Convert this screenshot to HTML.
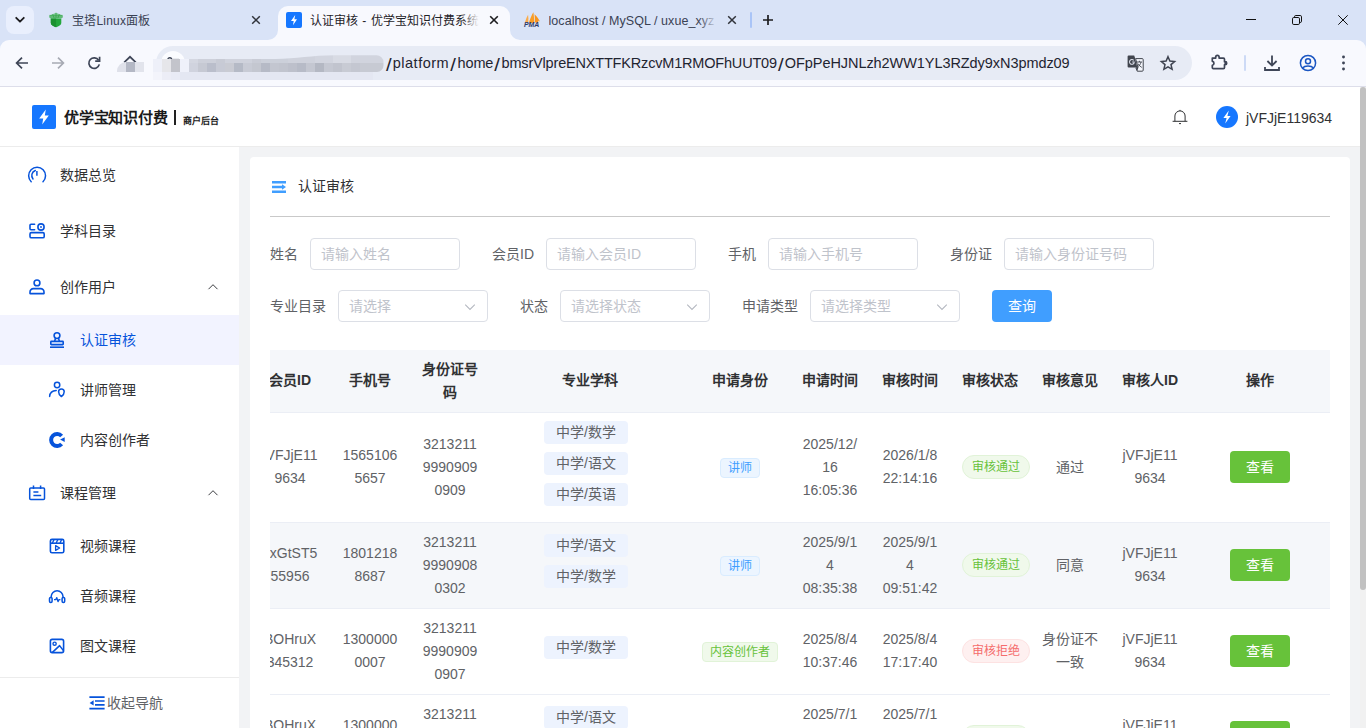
<!DOCTYPE html>
<html lang="zh-CN">
<head>
<meta charset="utf-8">
<title>认证审核 - 优学宝知识付费系统</title>
<style>
*{box-sizing:border-box;margin:0;padding:0}
html,body{width:1366px;height:728px;overflow:hidden;background:#fff}
body{font-family:"Liberation Sans",sans-serif;font-size:14px;color:#303133;position:relative}
.abs{position:absolute}
svg{display:block;overflow:visible}
/* ---------- browser chrome ---------- */
#chrome{position:absolute;left:0;top:0;width:1366px;height:87px;background:#d9e3f7;overflow:hidden}
#tabsearch{position:absolute;left:6px;top:6px;width:28px;height:28px;border-radius:8px;background:#e9effd}
.tabtxt{position:absolute;top:13.4px;height:17px;line-height:17px;font-size:12px;color:#3a4153;white-space:nowrap;overflow:hidden}
#acttab{position:absolute;left:278px;top:6px;width:232px;height:36px;background:#f8f9fe;border-radius:10px 10px 0 0}
#toolbar{position:absolute;left:0;top:40px;width:1366px;height:46px;background:#f8f9fe;border-radius:9px 9px 0 0}
#chromeline{position:absolute;left:0;top:86px;width:1366px;height:1px;background:#dddeea}
#omni{position:absolute;left:156px;top:46px;width:1036px;height:34px;border-radius:17px;background:#e7ebf5}
#url{position:absolute;left:385px;top:53px;height:20px;line-height:20px;font-size:14.5px;color:#1f2430;white-space:nowrap;letter-spacing:0}
/* ---------- app ---------- */
#hdr{position:absolute;left:0;top:87px;width:1360px;height:60px;background:#fff;border-bottom:1px solid #ececec}
#side{position:absolute;left:0;top:147px;width:239px;height:581px;background:#fff}
#main{position:absolute;left:239px;top:147px;width:1121px;height:581px;background:#f2f3f5;overflow:hidden}
#sbar{position:absolute;left:1360px;top:87px;width:6px;height:641px;background:#f1f1f1}
#sthumb{position:absolute;left:0;top:0;width:6px;height:503px;background:#c1c1c1;border-radius:3px}
.mi{position:absolute;left:0;width:239px;white-space:nowrap}
.mi span{position:absolute;font-size:14px;line-height:20px;height:20px;color:#303133}
.mi.top{height:56px}
.mi.top span{left:60px;top:18px}
.mi.sub{height:50px}
.mi.sub span{left:80px;top:15px}
.mi.act{background:#f2f3ff}
.mi.act span{color:#0653db}
.mi svg{position:absolute}
#card{position:absolute;left:11px;top:10px;width:1100px;height:700px;background:#fff;border-radius:4px}
.fl{position:absolute;height:32px;line-height:32px;font-size:14px;color:#606266;white-space:nowrap}
.inp{position:absolute;width:150px;height:32px;line-height:30px;border:1px solid #dcdfe6;border-radius:4px;background:#fff;padding:0 10px;font-size:14px;color:#bfc3cb;white-space:nowrap;overflow:hidden}
.inp.sel svg{position:absolute;right:11px;top:12px}
.btn{display:inline-block;width:60px;height:32px;line-height:32px;border-radius:4px;color:#fff;font-size:14px;text-align:center;white-space:nowrap;vertical-align:middle}
.btn.blue{background:#409eff}
.btn.green{background:#67c23a}
#tw{position:absolute;left:20px;top:193px;width:1060px;height:520px;overflow:hidden}
#tb{position:absolute;left:-20px;top:0;width:1080px;table-layout:fixed;border-collapse:separate;border-spacing:0}
#tb th{background:#f5f7fa;padding:8px 0;border-bottom:1px solid #ebeef5;font-weight:700;color:#303133;font-size:14px;text-align:center;vertical-align:middle}
#tb td{padding:8px 0;border-bottom:1px solid #ebeef5;color:#606266;font-size:14px;text-align:center;vertical-align:middle}
#tb th>div,#tb td>div{padding:0 10px;line-height:23px;white-space:nowrap}
#tb tr.hv td{background:#f5f7fa}
.sj{height:31px;text-align:center;font-size:0;line-height:0}
.sj span{display:inline-block;height:23px;line-height:23px;padding:0 12px;margin-right:8px;border-radius:4px;background:#edf3fe;color:#606266;font-size:14px;vertical-align:top}
.tg{display:inline-block;height:20px;line-height:18px;padding:0 7px;border-radius:4px;font-size:12px;border:1px solid;vertical-align:middle}
.tg.b{background:#ecf5ff;border-color:#d9ecff;color:#409eff}
.tg.g{background:#f0f9eb;border-color:#e1f3d8;color:#67c23a}
.st{display:inline-block;height:24px;line-height:22px;padding:0 9px;border-radius:12px;font-size:12px;border:1px solid;vertical-align:middle;margin-left:2px}
.st.g{background:#f0f9eb;border-color:#e1f3d8;color:#67c23a}
.st.r{background:#fef0f0;border-color:#fde2e2;color:#f56c6c}
#url .sl{display:inline-block;text-align:center;transform:translateY(1.2px) scale(1.4,1.32);transform-origin:50% 43.5%}
.u{position:relative;top:-1px}
#tb .btn,#tb .st{position:relative;top:-1px}
</style>
</head>
<body>
<!-- ================= BROWSER CHROME ================= -->
<div id="chrome">
  <div id="tabsearch"><svg width="28" height="28" viewBox="0 0 28 28"><path d="M10.2 11.8 L14 15.7 L17.8 11.8" fill="none" stroke="#1c1c1f" stroke-width="1.8" stroke-linecap="round" stroke-linejoin="round"/></svg></div>
  <!-- tab 1 -->
  <svg class="abs" style="left:49px;top:12px" width="14" height="16" viewBox="0 0 14 16"><path d="M1.8 6.4 H12.3 V11 C12.3 13 9.6 14.5 7.05 15.2 C4.5 14.5 1.8 13 1.8 11 Z" fill="#23a73c"/><path d="M1.8 6.4 H7.05 V15.2 C4.5 14.5 1.8 13 1.8 11 Z" fill="#1b9130"/><path d="M7 0.7 L13.6 3.4 L13.9 5 L12.4 6.4 H1.6 L0.2 5 L0.5 3.4 Z" fill="#3fb254" opacity="0.62"/><path d="M0.4 3.4 H13.6 M0.3 5 H13.8 M7 0.8 V6.4 M3.6 2.2 L5.2 6.2 M10.4 2.2 L8.8 6.2" fill="none" stroke="#2fa444" stroke-width="0.8" opacity="0.85"/></svg>
  <div class="tabtxt" style="left:72px;letter-spacing:0.2px">宝塔Linux面板</div>
  <svg class="abs" style="left:251px;top:15px" width="10" height="10" viewBox="0 0 10 10"><path d="M1.2 1.2 L8.8 8.8 M8.8 1.2 L1.2 8.8" stroke="#30333a" stroke-width="1.5" fill="none"/></svg>
  <!-- toolbar + active tab -->
  <div id="toolbar"></div>
  <div id="acttab"></div>
  <svg class="abs" style="left:268px;top:30px" width="10" height="10" viewBox="0 0 10 10"><path d="M0 10 H10 V0 A10 10 0 0 1 0 10 Z" fill="#f8f9fe"/></svg>
  <svg class="abs" style="left:510px;top:30px" width="10" height="10" viewBox="0 0 10 10"><path d="M10 10 H0 V0 A10 10 0 0 0 10 10 Z" fill="#f8f9fe"/></svg>
  <svg class="abs" style="left:286px;top:12px" width="16" height="16" viewBox="0 0 16 16"><rect width="16" height="16" rx="2" fill="#1677ff"/><path d="M9.2 3 L5 9 H7.7 L7 13.2 L11 7.2 H8.4 Z" fill="#fff"/></svg>
  <div class="tabtxt" style="left:310px;width:172px;color:#1f2328">认证审核<span style="letter-spacing:0.8px"> - </span>优学宝知识付费系统</div>
  <div class="abs" style="left:462px;top:10px;width:20px;height:22px;background:linear-gradient(90deg,rgba(248,249,254,0),#f8f9fe 85%)"></div>
  <svg class="abs" style="left:489px;top:15px" width="10" height="10" viewBox="0 0 10 10"><path d="M1.2 1.2 L8.8 8.8 M8.8 1.2 L1.2 8.8" stroke="#1c1c1f" stroke-width="1.6" fill="none"/></svg>
  <!-- tab 3 -->
  <svg class="abs" style="left:524px;top:12px" width="16" height="16" viewBox="0 0 16 16"><path d="M0.9 10.6 C1.8 7.6 2.8 5 4.1 2.8 C4.5 5.4 4.5 8 4.2 10.6 Z" fill="#fbab4a"/><path d="M4.9 10.9 C6 7 7.6 3.2 9.4 0.3 C10 3.6 10.2 7.2 10 10.9 Z" fill="#f99d25"/><path d="M10.6 2.2 C12.8 4.4 14.8 7 16 9.6 L13.8 8.6 L14.6 10.4 L10.6 10.6 C10.9 7.8 10.9 5 10.6 2.2 Z" fill="#f8941c"/><text x="0" y="15.1" font-family="Liberation Sans" font-size="6.9" font-weight="700" font-style="italic" fill="#2c3968">PMA</text></svg>
  <div class="tabtxt" style="left:548.5px;width:170px;font-size:12.5px;letter-spacing:0.06px">localhost / MySQL / uxue_xyz</div>
  <div class="abs" style="left:698px;top:10px;width:21px;height:22px;background:linear-gradient(90deg,rgba(217,227,247,0),#d9e3f7 95%)"></div>
  <svg class="abs" style="left:727px;top:15px" width="10" height="10" viewBox="0 0 10 10"><path d="M1.2 1.2 L8.8 8.8 M8.8 1.2 L1.2 8.8" stroke="#30333a" stroke-width="1.5" fill="none"/></svg>
  <div class="abs" style="left:750px;top:12px;width:2px;height:16px;background:#a9c4f7;border-radius:1px"></div>
  <svg class="abs" style="left:762px;top:14px" width="12" height="12" viewBox="0 0 12 12"><path d="M6 1 V11 M1 6 H11" stroke="#1c1c1f" stroke-width="1.7" fill="none"/></svg>
  <!-- window controls -->
  <div class="abs" style="left:1246px;top:19px;width:10px;height:1px;background:#111"></div>
  <svg class="abs" style="left:1292px;top:15px" width="10" height="10" viewBox="0 0 10 10"><path d="M2.5 2.5 V1.8 A1.3 1.3 0 0 1 3.8 0.5 H8.2 A1.3 1.3 0 0 1 9.5 1.8 V6.2 A1.3 1.3 0 0 1 8.2 7.5 H7.5" fill="none" stroke="#111" stroke-width="1"/><rect x="0.5" y="2.5" width="7" height="7" rx="1.3" fill="none" stroke="#111" stroke-width="1"/></svg>
  <svg class="abs" style="left:1338px;top:15px" width="10" height="10" viewBox="0 0 10 10"><path d="M0.3 0.3 L9.7 9.7 M9.7 0.3 L0.3 9.7" stroke="#111" stroke-width="1" fill="none"/></svg>
  <!-- nav buttons -->
  <svg class="abs" style="left:15px;top:56px" width="14" height="14" viewBox="0 0 14 14"><path d="M13 7 H2 M7 1.6 L1.6 7 L7 12.4" fill="none" stroke="#3e4557" stroke-width="1.7" stroke-linejoin="miter"/></svg>
  <svg class="abs" style="left:51px;top:56px" width="14" height="14" viewBox="0 0 14 14"><path d="M1 7 H12 M7 1.6 L12.4 7 L7 12.4" fill="none" stroke="#a7aab4" stroke-width="1.7"/></svg>
  <svg class="abs" style="left:87px;top:56px" width="14" height="14" viewBox="0 0 14 14"><path d="M11.6 4.2 A5.3 5.3 0 1 0 12.3 8.4" fill="none" stroke="#3e4557" stroke-width="1.7"/><path d="M12.6 0.8 V5.2 H8.2" fill="none" stroke="#3e4557" stroke-width="1.7"/></svg>
  <svg class="abs" style="left:122px;top:55px" width="16" height="16" viewBox="0 0 16 16"><path d="M2.2 7.4 L8 1.8 L13.8 7.4" fill="none" stroke="#3e4557" stroke-width="1.7"/></svg>
  <!-- omnibox -->
  <div id="omni"></div>
  <div class="abs" style="left:161px;top:51px;width:24px;height:24px;border-radius:12px;background:#fbfcff"></div>
  <svg class="abs" style="left:166px;top:56px" width="14" height="14" viewBox="0 0 14 14"><circle cx="3.8" cy="3.6" r="1.9" fill="none" stroke="#3e4557" stroke-width="1.4"/><path d="M7 3.6 H13" stroke="#3e4557" stroke-width="1.4"/></svg>
  <!-- mosaic -->
  <div class="abs" style="left:117px;top:62px;width:9px;height:10px;background:#dfe1ea;border-radius:9px 0 0 0"></div>
  <div class="abs" style="left:126px;top:62px;width:9px;height:10px;background:#b4b8c5"></div>
  <div class="abs" style="left:135px;top:62px;width:9px;height:10px;background:#e2e4ec"></div>
  <div class="abs" style="left:153px;top:59px;width:36px;height:13px;background:linear-gradient(90deg,#eef0f9 0 9px,#e6e6ea 9px 18px,#c3c4cb 18px 27px,#eff1fa 27px 36px)"></div>
  <div class="abs" style="left:189px;top:55px;width:195px;height:17px;clip-path:path('M0 4 H86 C108 4 122 0.3 146 0.3 H187.5 A7 7 0 0 1 194.5 7.3 V10.5 A6.5 6.5 0 0 1 188 17 H0 Z')">
    <div class="abs" style="left:0;top:0;width:195px;height:8.2px;background:linear-gradient(90deg,#d4d7e1 0 9px,#cdd0da 9px 27px,#c8cbd5 27px 36px,#cfd2dc 36px 63px,#c9ccd6 63px 72px,#ccd0da 72px 99px,#cfd2dc 99px 126px,#d2d5df 126px 144px,#d8dbe4 144px 162px,#d1d4de 162px 195px)"></div>
    <div class="abs" style="left:0;top:8.2px;width:195px;height:8.8px;background:linear-gradient(90deg,#d0d3de 0 9px,#c6c9d3 9px 18px,#babecb 18px 27px,#c7cad5 27px 36px,#c9cbd3 36px 45px,#b5bac6 45px 54px,#c8cbd5 54px 63px,#c4c7d0 63px 72px,#b6bac6 72px 81px,#c3c6d0 81px 90px,#c1c4ce 90px 99px,#bdc0cb 99px 108px,#b7bbc7 108px 117px,#c4c7d1 117px 126px,#b4b8c3 126px 135px,#c5c8d2 135px 144px,#c1c4ce 144px 153px,#c8cbd4 153px 162px,#c4c7d1 162px 171px,#c7cad3 171px 195px)"></div>
  </div>
  <div class="abs" style="left:153px;top:72px;width:220px;height:8px;background:linear-gradient(90deg,#f3f4fb 0 9px,#ecedf6 9px 18px,#e9ebf5 18px 27px,#e4e7f2 27px 220px)"></div>
  <div id="url"><span class="sl" style="width:7.8px">/</span><span style="letter-spacing:0.49px">platform</span><span class="sl" style="width:8.4px">/</span><span style="letter-spacing:-0.12px">home</span><span class="sl" style="width:8.3px">/</span><span style="letter-spacing:-0.184px">bmsrVlpreENXTTFKRzcvM1RMOFhUUT09</span><span class="sl" style="width:7.9px">/</span><span style="letter-spacing:-0.065px">OFpPeHJNLzh2WW1YL3RZdy9xN3pmdz09</span></div>
  <!-- translate + star -->
  <svg class="abs" style="left:1127.3px;top:54.5px" width="17" height="17" viewBox="0 0 17 17"><path d="M1.6 0.6 H7.2 L8.2 3.4 H8 L10.4 12.6 H1.6 A1 1 0 0 1 0.6 11.6 V1.6 A1 1 0 0 1 1.6 0.6 Z" fill="#41454e"/><path d="M8.6 3.6 H15.2 A1 1 0 0 1 16.2 4.6 V15.2 A1 1 0 0 1 15.2 16.2 H10.2 L8.9 12.8 L11 12.6 Z" fill="#f3f5fb" stroke="#41454e" stroke-width="1"/><path d="M9.2 12.7 L10.3 16 L11.4 12.6 Z" fill="#41454e"/><path d="M6.7 5.3 A2.4 2.4 0 1 0 7.1 8 V6.9 H5.2" fill="none" stroke="#dfe3ee" stroke-width="1.05"/><path d="M9.8 7 H15 M12.4 5.8 V7 M14 7 C13.6 9.2 12.2 11 10.4 12 M11 8.6 C11.8 10.2 13.2 11.6 14.8 12.4" fill="none" stroke="#41454e" stroke-width="0.9"/></svg>
  <svg class="abs" style="left:1160px;top:55px" width="16" height="16" viewBox="0 0 16 16"><path d="M8 1.7 L9.9 6.1 L14.6 6.5 L11 9.6 L12.1 14.3 L8 11.8 L3.9 14.3 L5 9.6 L1.4 6.5 L6.1 6.1 Z" fill="none" stroke="#3e4350" stroke-width="1.5" stroke-linejoin="miter"/></svg>
  <!-- right toolbar icons -->
  <svg class="abs" style="left:1211px;top:54px" width="17" height="17" viewBox="0 0 17 17"><path d="M1.3 4.1 H4.7 V3 A1.7 1.7 0 0 1 8.1 3 V4.1 H12.4 A1.1 1.1 0 0 1 13.5 5.2 V7.7 H14.2 A1.5 1.5 0 0 1 14.2 10.7 H13.5 V13.5 A1.1 1.1 0 0 1 12.4 14.6 H2.4 A1.1 1.1 0 0 1 1.3 13.5 V11.3 C3.5 11.1 3.5 7.5 1.3 7.3 Z" fill="none" stroke="#3e4557" stroke-width="1.7" stroke-linejoin="round"/><path d="M13.5 7.7 H14.2 A1.5 1.5 0 0 1 14.2 10.7 H13.5 Z" fill="#3e4557"/></svg>
  <div class="abs" style="left:1244px;top:55px;width:2px;height:16px;background:#cddaf6;border-radius:1px"></div>
  <svg class="abs" style="left:1264px;top:55px" width="16" height="16" viewBox="0 0 16 16"><path d="M8 0.6 V10.4 M3.4 6 L8 10.6 L12.6 6 M1 12 V15 H15 V12" fill="none" stroke="#3e4557" stroke-width="1.8"/></svg>
  <svg class="abs" style="left:1299px;top:54px" width="18" height="18" viewBox="0 0 18 18"><circle cx="9" cy="9" r="7.6" fill="none" stroke="#1b56c2" stroke-width="1.5"/><circle cx="9" cy="7.2" r="2.5" fill="none" stroke="#1b56c2" stroke-width="1.5"/><path d="M3.6 14 C5.6 11.4 12.4 11.4 14.4 14" fill="none" stroke="#1b56c2" stroke-width="1.5"/></svg>
  <svg class="abs" style="left:1341px;top:55px" width="5" height="16" viewBox="0 0 5 16"><circle cx="2.5" cy="2" r="1.45" fill="#3e4557"/><circle cx="2.5" cy="8" r="1.45" fill="#3e4557"/><circle cx="2.5" cy="14" r="1.45" fill="#3e4557"/></svg>
  <div id="chromeline"></div>
</div>

<!-- ================= APP HEADER ================= -->
<div id="hdr">
  <svg class="abs" style="left:32px;top:18px" width="24" height="24" viewBox="0 0 24 24"><rect width="24" height="24" rx="2" fill="#1677ff"/><path d="M13.8 4.4 L7.2 13.4 H11.2 L10.2 19.6 L16.8 10.6 H12.8 Z" fill="#fff"/></svg>
  <div class="abs" style="left:64px;top:20px;height:22px;line-height:22px;font-size:15px;font-weight:700;color:#1a1a1a;white-space:nowrap;letter-spacing:-0.2px">优学宝知识付费</div>
  <div class="abs" style="left:174.3px;top:22.5px;width:1.6px;height:15px;background:#222"></div>
  <div class="abs" style="left:182.5px;top:28px;height:12px;line-height:12px;font-size:9px;font-weight:700;color:#1a1a1a;white-space:nowrap">商户后台</div>
  <svg class="abs" style="left:1172px;top:22px" width="16" height="16" viewBox="0 0 16 16"><path d="M0.6 12.3 H15.4 M2.9 12.3 V7 A5.1 5.1 0 0 1 13.1 7 V12.3 M8 1.9 V0.9 M7 14.6 H9" fill="none" stroke="#303133" stroke-width="1"/></svg>
  <svg class="abs" style="left:1216px;top:19px" width="22" height="22" viewBox="0 0 22 22"><circle cx="11" cy="11" r="11" fill="#1677ff"/><path d="M12.8 4.4 L7.4 12 H10.6 L9.2 17.6 L14.6 10 H11.4 Z" fill="#fff"/></svg>
  <div class="abs" style="left:1246px;top:21px;height:20px;line-height:20px;font-size:14px;color:#303133;white-space:nowrap">jVFJjE119634</div>
</div>
<div id="sbar"><div id="sthumb"></div></div>

<!-- ================= SIDEBAR ================= -->
<div id="side">
  <!-- y offsets relative to sidebar top (147) -->
  <div class="mi top" style="top:0">
    <svg style="left:27px;top:18px" width="20" height="20" viewBox="0 0 20 20" fill="none" stroke="#0653db" stroke-width="1.5" stroke-linecap="round"><path d="M4.2 16.7 A8.45 8.45 0 1 1 16 16.7"/><path d="M6 13.9 A5.3 5.3 0 0 1 8.3 5.5"/><path d="M9.9 5.9 V10.8" stroke-linecap="butt"/></svg>
    <span>数据总览</span></div>
  <div class="mi top" style="top:56px">
    <svg style="left:27px;top:18px" width="20" height="20" viewBox="0 0 20 20" fill="none" stroke="#0653db" stroke-width="1.6" stroke-linecap="round" stroke-linejoin="round"><path d="M7.6 3.3 H4 A1 1 0 0 0 3 4.3 V7.8 A1 1 0 0 0 4 8.8 H7.6"/><circle cx="14" cy="6" r="3.1"/><circle cx="14" cy="6" r="0.9" fill="#0653db" stroke="none"/><rect x="3" y="11.6" width="14.2" height="5.2" rx="1.4"/></svg>
    <span>学科目录</span></div>
  <div class="mi top" style="top:112px">
    <svg style="left:27px;top:18px" width="20" height="20" viewBox="0 0 20 20" fill="none" stroke="#0653db" stroke-width="1.6" stroke-linejoin="round"><circle cx="10" cy="5.9" r="2.9"/><path d="M3 16.6 V15 A3.4 3.4 0 0 1 6.4 11.6 H13.6 A3.4 3.4 0 0 1 17 15 V16.6 Z"/></svg>
    <span>创作用户</span>
    <svg style="left:207px;top:24px" width="12" height="8" viewBox="0 0 12 8" fill="none" stroke="#3a3c40" stroke-width="1"><path d="M1.5 6.2 L6 1.7 L10.5 6.2"/></svg></div>
  <div class="mi sub act" style="top:168px">
    <svg style="left:47px;top:15px" width="20" height="20" viewBox="0 0 20 20" fill="none" stroke="#0653db" stroke-width="1.6" stroke-linejoin="round"><circle cx="10" cy="5.6" r="2.9"/><path d="M8.5 8.2 L7.6 11.4 M11.5 8.2 L12.4 11.4"/><rect x="3.8" y="11.4" width="12.4" height="3.2" rx="0.6"/><path d="M3 17.2 H17" stroke-linecap="butt"/></svg>
    <span>认证审核</span></div>
  <div class="mi sub" style="top:218px">
    <svg style="left:47px;top:15px" width="20" height="20" viewBox="0 0 20 20" fill="none" stroke="#0653db" stroke-width="1.5" stroke-linecap="round" stroke-linejoin="round"><circle cx="10.1" cy="5" r="2.7"/><path d="M2.6 16.4 C2.9 12.8 5.6 10.6 9.2 10.5"/><path d="M11.6 11.8 A2.8 2.8 0 0 1 17.2 11.8 C17.2 13.9 15.8 15.6 14.4 16.6 C13 15.6 11.6 13.9 11.6 11.8 Z"/></svg>
    <span>讲师管理</span></div>
  <div class="mi sub" style="top:268px">
    <svg style="left:47px;top:15px" width="20" height="20" viewBox="0 0 20 20"><path d="M14.6 6 A6 6 0 1 0 14.6 14" fill="none" stroke="#0653db" stroke-width="4"/><path d="M13.1 9.6 L17.7 7.2 V12 Z" fill="#0653db"/></svg>
    <span>内容创作者</span></div>
  <div class="mi top" style="top:318px">
    <svg style="left:27px;top:18px" width="20" height="20" viewBox="0 0 20 20" fill="none" stroke="#0653db" stroke-width="1.5" stroke-linejoin="round"><rect x="2.7" y="5" width="14.8" height="11.4" rx="1"/><path d="M6.5 2.6 V6 M13.6 2.6 V6 M6.4 9 H11.4 M6.4 12.6 H14.2"/></svg>
    <span>课程管理</span>
    <svg style="left:207px;top:24px" width="12" height="8" viewBox="0 0 12 8" fill="none" stroke="#3a3c40" stroke-width="1"><path d="M1.5 6.2 L6 1.7 L10.5 6.2"/></svg></div>
  <div class="mi sub" style="top:374px">
    <svg style="left:47px;top:15px" width="20" height="20" viewBox="0 0 20 20" fill="none" stroke="#0653db" stroke-width="1.6" stroke-linejoin="round"><rect x="3.4" y="3.4" width="13.4" height="13.4" rx="1.6"/><path d="M3.4 7.2 H16.8"/><path d="M7 3.6 L5.4 7 M10.8 3.6 L9.2 7 M14.6 3.6 L13 7" stroke-width="1.3"/><path d="M8.6 9.6 L12.6 12 L8.6 14.4 Z" stroke-width="1.3"/></svg>
    <span>视频课程</span></div>
  <div class="mi sub" style="top:424px">
    <svg style="left:47px;top:15px" width="20" height="20" viewBox="0 0 20 20" fill="none" stroke="#0653db" stroke-width="1.5" stroke-linejoin="round"><path d="M4.2 12 V10.6 A5.9 5.9 0 0 1 16 10.6 V12"/><rect x="2.5" y="11.4" width="2.6" height="5" rx="1.2"/><rect x="15.1" y="11.4" width="2.6" height="5" rx="1.2"/><path d="M7 13.6 H8.8 L9.8 11.6 L11 15.6 L12 13.6 H13.4" stroke-width="1.3"/></svg>
    <span>音频课程</span></div>
  <div class="mi sub" style="top:474px">
    <svg style="left:47px;top:15px" width="20" height="20" viewBox="0 0 20 20" fill="none" stroke="#0653db" stroke-width="1.6" stroke-linejoin="round"><rect x="3.4" y="3.4" width="13.2" height="13.2" rx="1.8"/><circle cx="7.6" cy="7.7" r="1.6" stroke-width="1.4"/><path d="M5.4 16.4 L12.6 9.6 L16.4 14.6" stroke-width="1.5"/></svg>
    <span>图文课程</span></div>
  <div class="abs" style="left:0;top:530px;width:240px;height:1px;background:#ececec"></div>
  <svg class="abs" style="left:89px;top:548px" width="16" height="16" viewBox="0 0 16 16" fill="none" stroke="#0653db" stroke-width="1.7"><path d="M0.4 2.2 H15.6 M6 6 H15.6 M6 9.8 H15.6 M0.4 13.6 H15.6"/><path d="M0.6 7.9 L4.6 5.2 V10.6 Z" fill="#0653db" stroke="none"/></svg>
  <div class="abs" style="left:107px;top:546px;height:20px;line-height:20px;font-size:14px;color:#606266;white-space:nowrap">收起导航</div>
</div>

<!-- ================= MAIN ================= -->
<div id="main">
  <div id="card">
    <svg class="abs" style="left:22px;top:24px" width="14" height="12" viewBox="0 0 14 12"><path d="M0 0 H14 V2.4 H0 Z M0 4.8 H10 V7.2 H0 Z M0 9.6 H14 V12 H0 Z M10 3.2 L14 6 L10 8.8 Z" fill="#409eff"/></svg>
    <div class="abs" style="left:48px;top:19px;height:20px;line-height:20px;font-size:14px;color:#303133;white-space:nowrap">认证审核</div>
    <div class="abs" style="left:20px;top:59px;width:1060px;height:1px;background:#c9c9c9"></div>
    <!-- form row 1 -->
    <label class="fl" style="left:20px;top:81px">姓名</label><div class="inp" style="left:60px;top:81px">请输入姓名</div>
    <label class="fl" style="left:242px;top:81px">会员ID</label><div class="inp" style="left:296px;top:81px">请输入会员ID</div>
    <label class="fl" style="left:478px;top:81px">手机</label><div class="inp" style="left:518px;top:81px">请输入手机号</div>
    <label class="fl" style="left:700px;top:81px">身份证</label><div class="inp" style="left:754px;top:81px">请输入身份证号码</div>
    <!-- form row 2 -->
    <label class="fl" style="left:20px;top:133px">专业目录</label><div class="inp sel" style="left:88px;top:133px">请选择<svg width="12" height="8" viewBox="0 0 12 8"><path d="M1.2 1.6 L6 6.4 L10.8 1.6" fill="none" stroke="#b4b8c0" stroke-width="1.1"/></svg></div>
    <label class="fl" style="left:270px;top:133px">状态</label><div class="inp sel" style="left:310px;top:133px">请选择状态<svg width="12" height="8" viewBox="0 0 12 8"><path d="M1.2 1.6 L6 6.4 L10.8 1.6" fill="none" stroke="#b4b8c0" stroke-width="1.1"/></svg></div>
    <label class="fl" style="left:492px;top:133px">申请类型</label><div class="inp sel" style="left:560px;top:133px">请选择类型<svg width="12" height="8" viewBox="0 0 12 8"><path d="M1.2 1.6 L6 6.4 L10.8 1.6" fill="none" stroke="#b4b8c0" stroke-width="1.1"/></svg></div>
    <div class="btn blue" style="position:absolute;left:742px;top:133px">查询</div>
    <!-- table -->
    <div id="tw">
      <table id="tb" cellspacing="0" cellpadding="0">
        <colgroup><col width="80"><col width="80"><col width="80"><col width="200"><col width="100"><col width="80"><col width="80"><col width="80"><col width="80"><col width="80"><col width="140"></colgroup>
        <thead><tr><th><div class="u">会员ID</div></th><th><div class="u">手机号</div></th><th><div>身份证号<br>码</div></th><th><div class="u">专业学科</div></th><th><div class="u">申请身份</div></th><th><div class="u">申请时间</div></th><th><div class="u">审核时间</div></th><th><div class="u">审核状态</div></th><th><div class="u">审核意见</div></th><th><div class="u">审核人ID</div></th><th><div class="u">操作</div></th></tr></thead>
        <tbody>
          <tr>
            <td><div class="u">jVFJjE11<br>9634</div></td><td><div class="u">1565106<br>5657</div></td><td><div>3213211<br>9990909<br>0909</div></td>
            <td><div><p class="sj"><span>中学/数学</span></p><p class="sj"><span>中学/语文</span></p><p class="sj"><span>中学/英语</span></p></div></td>
            <td><div><span class="tg b">讲师</span></div></td>
            <td><div>2025/12/<br>16<br>16:05:36</div></td><td><div class="u">2026/1/8<br>22:14:16</div></td>
            <td><div><span class="st g">审核通过</span></div></td><td><div>通过</div></td><td><div class="u">jVFJjE11<br>9634</div></td>
            <td><div><span class="btn green">查看</span></div></td>
          </tr>
          <tr class="hv">
            <td><div class="u">kxGtST5<br>55956</div></td><td><div class="u">1801218<br>8687</div></td><td><div>3213211<br>9990908<br>0302</div></td>
            <td><div class="u"><p class="sj"><span>中学/语文</span></p><p class="sj"><span>中学/数学</span></p></div></td>
            <td><div><span class="tg b">讲师</span></div></td>
            <td><div>2025/9/1<br>4<br>08:35:38</div></td><td><div>2025/9/1<br>4<br>09:51:42</div></td>
            <td><div><span class="st g">审核通过</span></div></td><td><div>同意</div></td><td><div class="u">jVFJjE11<br>9634</div></td>
            <td><div><span class="btn green">查看</span></div></td>
          </tr>
          <tr>
            <td><div class="u">BOHruX<br>345312</div></td><td><div class="u">1300000<br>0007</div></td><td><div>3213211<br>9990909<br>0907</div></td>
            <td><div><p class="sj"><span>中学/数学</span></p></div></td>
            <td><div><span class="tg g">内容创作者</span></div></td>
            <td><div class="u">2025/8/4<br>10:37:46</div></td><td><div class="u">2025/8/4<br>17:17:40</div></td>
            <td><div><span class="st r">审核拒绝</span></div></td><td><div class="u">身份证不<br>一致</div></td><td><div class="u">jVFJjE11<br>9634</div></td>
            <td><div><span class="btn green">查看</span></div></td>
          </tr>
          <tr>
            <td><div class="u">BOHruX<br>345312</div></td><td><div class="u">1300000<br>0006</div></td><td><div>3213211<br>9990909<br>0906</div></td>
            <td><div class="u"><p class="sj"><span>中学/语文</span></p><p class="sj"><span>中学/数学</span></p></div></td>
            <td><div><span class="tg g">内容创作者</span></div></td>
            <td><div>2025/7/1<br>5<br>09:12:30</div></td><td><div>2025/7/1<br>6<br>10:20:18</div></td>
            <td><div><span class="st g">审核通过</span></div></td><td><div>通过</div></td><td><div class="u">jVFJjE11<br>9634</div></td>
            <td><div><span class="btn green">查看</span></div></td>
          </tr>
        </tbody>
      </table>
    </div>
  </div>
</div>
</body>
</html>
